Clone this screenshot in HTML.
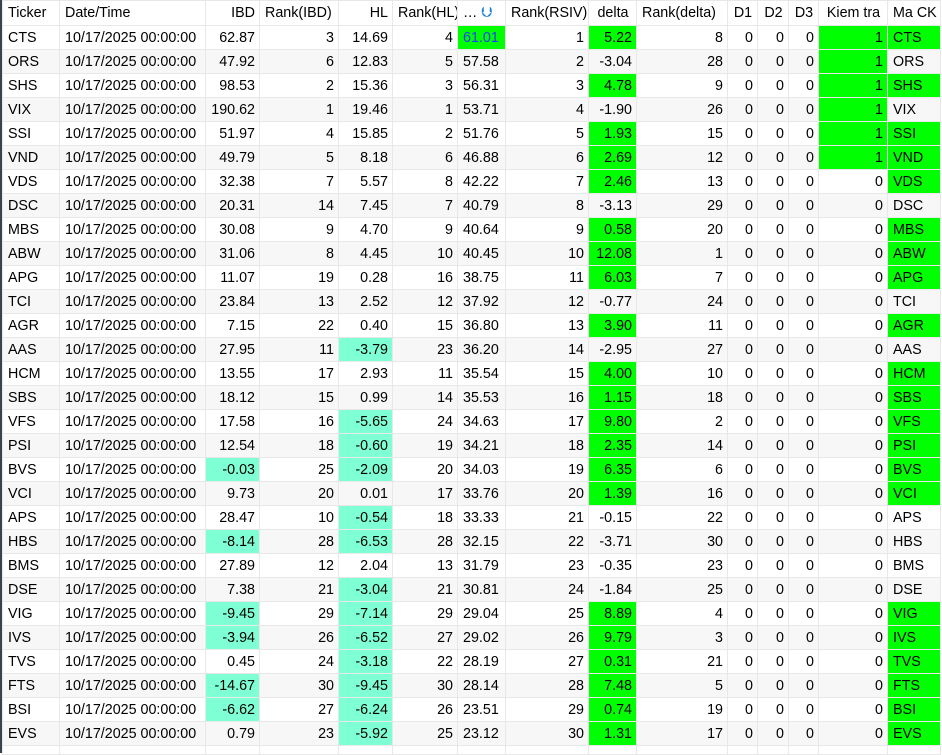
<!DOCTYPE html>
<html><head><meta charset="utf-8"><style>
html,body{margin:0;padding:0;background:#fff;width:942px;height:753px;overflow:hidden}
body{font-family:"Liberation Sans",sans-serif;font-size:14.3px;color:#000}
.wrap{position:absolute;left:0;top:0;width:942px;height:753px;border-left:2px solid #3a4450;box-sizing:border-box}
table{border-collapse:collapse;table-layout:fixed;width:938px;position:absolute;left:0;top:0}
td,th{height:23px;padding:0 4px 0 5px;border:1px solid #e8e8e8;white-space:nowrap;overflow:hidden;font-weight:normal;text-align:right}
th{height:24px;background:#fff}
th.l,td.l{text-align:left}
tr:nth-child(odd) td{background:#f7f7f7}
td.g,tr:nth-child(odd) td.g{background:#00ff00}
td.a,tr:nth-child(odd) td.a{background:#7fffd4}
td.b{color:#1a3cff}
tr.e td{background:#fff;height:8px}
</style></head><body><div class="wrap">
<table>
<colgroup><col style="width:57px"><col style="width:146px"><col style="width:54px"><col style="width:79px"><col style="width:54px"><col style="width:65px"><col style="width:48px"><col style="width:83px"><col style="width:48px"><col style="width:91px"><col style="width:30px"><col style="width:31px"><col style="width:30px"><col style="width:69px"><col style="width:53px"></colgroup>
<tr><th class="l">Ticker</th><th class="l">Date/Time</th><th>IBD</th><th class="l">Rank(IBD)</th><th>HL</th><th class="l">Rank(HL)</th><th class="l">… <span style="color:#1e7fd8">&#x2B8B;</span></th><th class="l">Rank(RSIV)</th><th style="text-align:center">delta</th><th class="l">Rank(delta)</th><th style="text-align:center">D1</th><th style="text-align:center">D2</th><th style="text-align:center">D3</th><th style="text-align:center">Kiem tra</th><th class="l">Ma CK</th></tr>
<tr><td class="l">CTS</td><td class="l">10/17/2025 00:00:00</td><td>62.87</td><td>3</td><td>14.69</td><td>4</td><td class="g b l">61.01</td><td>1</td><td class="g">5.22</td><td>8</td><td>0</td><td>0</td><td>0</td><td class="g">1</td><td class="l g">CTS</td></tr>
<tr><td class="l">ORS</td><td class="l">10/17/2025 00:00:00</td><td>47.92</td><td>6</td><td>12.83</td><td>5</td><td class="l">57.58</td><td>2</td><td>-3.04</td><td>28</td><td>0</td><td>0</td><td>0</td><td class="g">1</td><td class="l">ORS</td></tr>
<tr><td class="l">SHS</td><td class="l">10/17/2025 00:00:00</td><td>98.53</td><td>2</td><td>15.36</td><td>3</td><td class="l">56.31</td><td>3</td><td class="g">4.78</td><td>9</td><td>0</td><td>0</td><td>0</td><td class="g">1</td><td class="l g">SHS</td></tr>
<tr><td class="l">VIX</td><td class="l">10/17/2025 00:00:00</td><td>190.62</td><td>1</td><td>19.46</td><td>1</td><td class="l">53.71</td><td>4</td><td>-1.90</td><td>26</td><td>0</td><td>0</td><td>0</td><td class="g">1</td><td class="l">VIX</td></tr>
<tr><td class="l">SSI</td><td class="l">10/17/2025 00:00:00</td><td>51.97</td><td>4</td><td>15.85</td><td>2</td><td class="l">51.76</td><td>5</td><td class="g">1.93</td><td>15</td><td>0</td><td>0</td><td>0</td><td class="g">1</td><td class="l g">SSI</td></tr>
<tr><td class="l">VND</td><td class="l">10/17/2025 00:00:00</td><td>49.79</td><td>5</td><td>8.18</td><td>6</td><td class="l">46.88</td><td>6</td><td class="g">2.69</td><td>12</td><td>0</td><td>0</td><td>0</td><td class="g">1</td><td class="l g">VND</td></tr>
<tr><td class="l">VDS</td><td class="l">10/17/2025 00:00:00</td><td>32.38</td><td>7</td><td>5.57</td><td>8</td><td class="l">42.22</td><td>7</td><td class="g">2.46</td><td>13</td><td>0</td><td>0</td><td>0</td><td>0</td><td class="l g">VDS</td></tr>
<tr><td class="l">DSC</td><td class="l">10/17/2025 00:00:00</td><td>20.31</td><td>14</td><td>7.45</td><td>7</td><td class="l">40.79</td><td>8</td><td>-3.13</td><td>29</td><td>0</td><td>0</td><td>0</td><td>0</td><td class="l">DSC</td></tr>
<tr><td class="l">MBS</td><td class="l">10/17/2025 00:00:00</td><td>30.08</td><td>9</td><td>4.70</td><td>9</td><td class="l">40.64</td><td>9</td><td class="g">0.58</td><td>20</td><td>0</td><td>0</td><td>0</td><td>0</td><td class="l g">MBS</td></tr>
<tr><td class="l">ABW</td><td class="l">10/17/2025 00:00:00</td><td>31.06</td><td>8</td><td>4.45</td><td>10</td><td class="l">40.45</td><td>10</td><td class="g">12.08</td><td>1</td><td>0</td><td>0</td><td>0</td><td>0</td><td class="l g">ABW</td></tr>
<tr><td class="l">APG</td><td class="l">10/17/2025 00:00:00</td><td>11.07</td><td>19</td><td>0.28</td><td>16</td><td class="l">38.75</td><td>11</td><td class="g">6.03</td><td>7</td><td>0</td><td>0</td><td>0</td><td>0</td><td class="l g">APG</td></tr>
<tr><td class="l">TCI</td><td class="l">10/17/2025 00:00:00</td><td>23.84</td><td>13</td><td>2.52</td><td>12</td><td class="l">37.92</td><td>12</td><td>-0.77</td><td>24</td><td>0</td><td>0</td><td>0</td><td>0</td><td class="l">TCI</td></tr>
<tr><td class="l">AGR</td><td class="l">10/17/2025 00:00:00</td><td>7.15</td><td>22</td><td>0.40</td><td>15</td><td class="l">36.80</td><td>13</td><td class="g">3.90</td><td>11</td><td>0</td><td>0</td><td>0</td><td>0</td><td class="l g">AGR</td></tr>
<tr><td class="l">AAS</td><td class="l">10/17/2025 00:00:00</td><td>27.95</td><td>11</td><td class="a">-3.79</td><td>23</td><td class="l">36.20</td><td>14</td><td>-2.95</td><td>27</td><td>0</td><td>0</td><td>0</td><td>0</td><td class="l">AAS</td></tr>
<tr><td class="l">HCM</td><td class="l">10/17/2025 00:00:00</td><td>13.55</td><td>17</td><td>2.93</td><td>11</td><td class="l">35.54</td><td>15</td><td class="g">4.00</td><td>10</td><td>0</td><td>0</td><td>0</td><td>0</td><td class="l g">HCM</td></tr>
<tr><td class="l">SBS</td><td class="l">10/17/2025 00:00:00</td><td>18.12</td><td>15</td><td>0.99</td><td>14</td><td class="l">35.53</td><td>16</td><td class="g">1.15</td><td>18</td><td>0</td><td>0</td><td>0</td><td>0</td><td class="l g">SBS</td></tr>
<tr><td class="l">VFS</td><td class="l">10/17/2025 00:00:00</td><td>17.58</td><td>16</td><td class="a">-5.65</td><td>24</td><td class="l">34.63</td><td>17</td><td class="g">9.80</td><td>2</td><td>0</td><td>0</td><td>0</td><td>0</td><td class="l g">VFS</td></tr>
<tr><td class="l">PSI</td><td class="l">10/17/2025 00:00:00</td><td>12.54</td><td>18</td><td class="a">-0.60</td><td>19</td><td class="l">34.21</td><td>18</td><td class="g">2.35</td><td>14</td><td>0</td><td>0</td><td>0</td><td>0</td><td class="l g">PSI</td></tr>
<tr><td class="l">BVS</td><td class="l">10/17/2025 00:00:00</td><td class="a">-0.03</td><td>25</td><td class="a">-2.09</td><td>20</td><td class="l">34.03</td><td>19</td><td class="g">6.35</td><td>6</td><td>0</td><td>0</td><td>0</td><td>0</td><td class="l g">BVS</td></tr>
<tr><td class="l">VCI</td><td class="l">10/17/2025 00:00:00</td><td>9.73</td><td>20</td><td>0.01</td><td>17</td><td class="l">33.76</td><td>20</td><td class="g">1.39</td><td>16</td><td>0</td><td>0</td><td>0</td><td>0</td><td class="l g">VCI</td></tr>
<tr><td class="l">APS</td><td class="l">10/17/2025 00:00:00</td><td>28.47</td><td>10</td><td class="a">-0.54</td><td>18</td><td class="l">33.33</td><td>21</td><td>-0.15</td><td>22</td><td>0</td><td>0</td><td>0</td><td>0</td><td class="l">APS</td></tr>
<tr><td class="l">HBS</td><td class="l">10/17/2025 00:00:00</td><td class="a">-8.14</td><td>28</td><td class="a">-6.53</td><td>28</td><td class="l">32.15</td><td>22</td><td>-3.71</td><td>30</td><td>0</td><td>0</td><td>0</td><td>0</td><td class="l">HBS</td></tr>
<tr><td class="l">BMS</td><td class="l">10/17/2025 00:00:00</td><td>27.89</td><td>12</td><td>2.04</td><td>13</td><td class="l">31.79</td><td>23</td><td>-0.35</td><td>23</td><td>0</td><td>0</td><td>0</td><td>0</td><td class="l">BMS</td></tr>
<tr><td class="l">DSE</td><td class="l">10/17/2025 00:00:00</td><td>7.38</td><td>21</td><td class="a">-3.04</td><td>21</td><td class="l">30.81</td><td>24</td><td>-1.84</td><td>25</td><td>0</td><td>0</td><td>0</td><td>0</td><td class="l">DSE</td></tr>
<tr><td class="l">VIG</td><td class="l">10/17/2025 00:00:00</td><td class="a">-9.45</td><td>29</td><td class="a">-7.14</td><td>29</td><td class="l">29.04</td><td>25</td><td class="g">8.89</td><td>4</td><td>0</td><td>0</td><td>0</td><td>0</td><td class="l g">VIG</td></tr>
<tr><td class="l">IVS</td><td class="l">10/17/2025 00:00:00</td><td class="a">-3.94</td><td>26</td><td class="a">-6.52</td><td>27</td><td class="l">29.02</td><td>26</td><td class="g">9.79</td><td>3</td><td>0</td><td>0</td><td>0</td><td>0</td><td class="l g">IVS</td></tr>
<tr><td class="l">TVS</td><td class="l">10/17/2025 00:00:00</td><td>0.45</td><td>24</td><td class="a">-3.18</td><td>22</td><td class="l">28.19</td><td>27</td><td class="g">0.31</td><td>21</td><td>0</td><td>0</td><td>0</td><td>0</td><td class="l g">TVS</td></tr>
<tr><td class="l">FTS</td><td class="l">10/17/2025 00:00:00</td><td class="a">-14.67</td><td>30</td><td class="a">-9.45</td><td>30</td><td class="l">28.14</td><td>28</td><td class="g">7.48</td><td>5</td><td>0</td><td>0</td><td>0</td><td>0</td><td class="l g">FTS</td></tr>
<tr><td class="l">BSI</td><td class="l">10/17/2025 00:00:00</td><td class="a">-6.62</td><td>27</td><td class="a">-6.24</td><td>26</td><td class="l">23.51</td><td>29</td><td class="g">0.74</td><td>19</td><td>0</td><td>0</td><td>0</td><td>0</td><td class="l g">BSI</td></tr>
<tr><td class="l">EVS</td><td class="l">10/17/2025 00:00:00</td><td>0.79</td><td>23</td><td class="a">-5.92</td><td>25</td><td class="l">23.12</td><td>30</td><td class="g">1.31</td><td>17</td><td>0</td><td>0</td><td>0</td><td>0</td><td class="l g">EVS</td></tr>
<tr class="e"><td></td><td></td><td></td><td></td><td></td><td></td><td></td><td></td><td></td><td></td><td></td><td></td><td></td><td></td><td></td></tr>
</table></div></body></html>
